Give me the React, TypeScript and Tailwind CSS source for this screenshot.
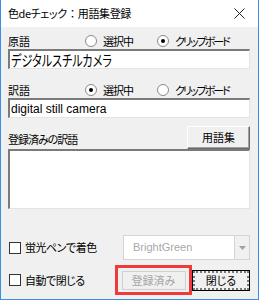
import React from 'react';

const jp = { fontFamily: '"Noto Sans CJK JP", "Noto Sans", sans-serif', fontFeatureSettings: '"palt"' };
const latin = { fontFamily: '"Liberation Sans", Arial, sans-serif' };

function Radio({ checked, label, narrow }: { checked?: boolean; label: string; narrow?: boolean }) {
  return (
    <div className="flex items-center gap-[6px] whitespace-nowrap">
      <span className="w-[12px] h-[12px] rounded-full border border-[#8a8a8a] bg-white flex items-center justify-center">
        {checked && <span className="w-[4px] h-[4px] rounded-full bg-black" />}
      </span>
      <span className={`text-[11px] text-black leading-none ${narrow ? 'tracking-[-2px]' : 'tracking-[-1px]'}`}>{label}</span>
    </div>
  );
}

function Checkbox({ label }: { label: string }) {
  return (
    <div className="flex items-center gap-[4px] whitespace-nowrap">
      <span className="w-[12px] h-[12px] border border-[#333] bg-white" />
      <span className="text-[11px] tracking-[-0.5px] text-black leading-none">{label}</span>
    </div>
  );
}

const sunken =
  'bg-white border-t-2 border-l-2 border-b border-r border-t-[#7a7a7a] border-l-[#7a7a7a] border-b-[#e3e3e3] border-r-[#e3e3e3]';

export default function App() {
  return (
    <div className="w-[259px] h-[300px] bg-[#f0f0f0] border-x border-b border-[#3a8ee6] flex flex-col" style={jp}>
      {/* Title bar */}
      <div className="h-[27px] bg-white flex items-center justify-between pl-[7px] pr-[13px]">
        <span className="text-[11px] tracking-[-0.4px] text-black leading-none whitespace-nowrap">
          色deチェック<span className="px-[3px]">：</span>用語集登録
        </span>
        <svg width="11" height="11" viewBox="0 0 11 11">
          <path d="M0.5 0.5 L10.5 10.5 M10.5 0.5 L0.5 10.5" stroke="#222" strokeWidth="1" />
        </svg>
      </div>

      <div className="flex flex-col pl-[7px] pr-[8px]">
        {/* 原語 */}
        <div className="mt-[6px] h-[16px] flex items-center">
          <span className="w-[77px] text-[11px] leading-none">原語</span>
          <div className="w-[72px]"><Radio label="選択中" /></div>
          <Radio checked narrow label="クリップボード" />
        </div>
        <div className={`h-[20px] ${sunken} flex items-center pl-[1px] overflow-hidden`}>
          <span className="inline-block text-[15px] leading-none text-black whitespace-nowrap origin-left scale-x-[0.74]">デジタルスチルカメラ</span>
        </div>

        {/* 訳語 */}
        <div className="mt-[13px] h-[16px] flex items-center">
          <span className="w-[77px] text-[11px] leading-none">訳語</span>
          <div className="w-[72px]"><Radio checked label="選択中" /></div>
          <Radio narrow label="クリップボード" />
        </div>
        <div className={`h-[20px] ${sunken} flex items-center pl-[1px]`}>
          <span className="text-[12px] leading-none text-black" style={latin}>digital still camera</span>
        </div>

        {/* 登録済みの訳語 */}
        <div className="mt-[7px] h-[24px] flex items-end justify-between">
          <span className="text-[11px] tracking-[-1px] leading-none mb-[4px]">登録済みの訳語</span>
          <div className="w-[63px] h-[23px] bg-[#f0f0f0] border border-t-white border-l-white border-b-[#696969] border-r-[#696969] shadow-[inset_-1px_-1px_0_#a0a0a0] flex items-center justify-center">
            <span className="text-[11px] leading-none">用語集</span>
          </div>
        </div>
        <div className={`h-[60px] ${sunken}`} />

        {/* 蛍光ペン */}
        <div className="mt-[26px] h-[25px] flex items-center justify-between">
          <div className="pl-[1px]"><Checkbox label="蛍光ペンで着色" /></div>
          <div className="w-[127px] h-[25px] bg-white border border-[#d4d4d4] flex items-stretch">
            <span className="flex-1 flex items-center pl-[9px] text-[11px] text-[#a8a8a8]" style={latin}>BrightGreen</span>
            <div className="w-[15px] bg-[#f0f0f0] border-l border-[#d4d4d4] flex items-center justify-center">
              <svg width="7" height="4" viewBox="0 0 7 4"><path d="M0 0 L7 0 L3.5 4 Z" fill="#a0a0a0" /></svg>
            </div>
          </div>
        </div>

        {/* 自動で閉じる */}
        <div className="mt-[5px] h-[30px] flex items-center justify-between">
          <div className="pl-[1px]"><Checkbox label="自動で閉じる" /></div>
          <div className="flex items-center">
            <div className="w-[77px] h-[30px] border-[3px] border-[#f0393d] flex items-center justify-center">
              <div className="w-[64px] h-[19px] bg-[#f0f0f0] border border-[#d0d0d0] flex items-center justify-center">
                <span className="text-[11px] leading-none text-[#a6a6a6]">登録済み</span>
              </div>
            </div>
            <div className="w-[58px] h-[21px] border border-black bg-[#f0f0f0]">
              <div className="w-full h-full border-2 border-dotted border-[#7a7a7a] flex items-center justify-center">
                <span className="text-[11px] leading-none text-black">閉じる</span>
              </div>
            </div>
          </div>
        </div>
      </div>
    </div>
  );
}
